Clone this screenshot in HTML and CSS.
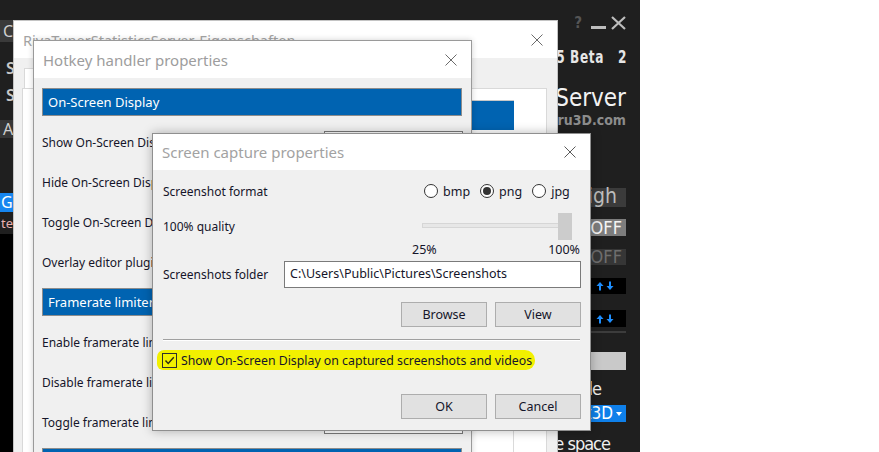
FILE: index.html
```html
<!DOCTYPE html>
<html lang="en">
<head>
    <meta charset="UTF-8">
    <meta name="viewport" content="width=device-width, initial-scale=1.0">
    <title>Screen capture properties</title>
    <link rel="stylesheet" href="styles.css">
</head>
<body>
    <div class="desktop">
        <!-- dark RTSS main window behind the dialogs -->
        <div class="app">
            <div class="app-left">
                <div class="chip">C</div>
                <div class="side-letter">S</div>
                <div class="side-letter second">S</div>
                <div class="chip small">A</div>
                <div class="chip blue">G</div>
                <div class="side-red">te</div>
                <div class="side-black"></div>
            </div>

            <div class="app-right">
                <div class="app-controls">
                    <span class="help">?</span>
                    <span class="minimize"></span>
                    <svg width="15" height="14" viewBox="0 0 15 14"><path d="M1 1 L14 13 M14 1 L1 13" stroke="#bdbdbd" stroke-width="2.2" fill="none"/></svg>
                </div>
                <div class="version">v7.3.5 Beta<span class="build">2</span></div>
                <div class="brand">RivaTuner Statistics Server</div>
                <div class="brand-sub">Guru3D.com</div>

                <div class="tile dim">High</div>
                <div class="tile grey">OFF</div>
                <div class="tile dark">OFF</div>
                <div class="tile black">
                    <svg width="20" height="10" viewBox="0 0 20 10"><path d="M5 1 L1.5 5 H4 V9.5 H6 V5 H8.5 Z M15 9 L18.5 5 H16 V0.5 H14 V5 H11.5 Z" fill="#1e8fff"/></svg>
                </div>
                <div class="tile black second">
                    <svg width="20" height="10" viewBox="0 0 20 10"><path d="M5 1 L1.5 5 H4 V9.5 H6 V5 H8.5 Z M15 9 L18.5 5 H16 V0.5 H14 V5 H11.5 Z" fill="#1e8fff"/></svg>
                </div>
                <div class="rule"></div>
                <div class="tile light"></div>
                <div class="app-text">Profile</div>
                <div class="tile blue">Direct3D<span class="caret"></span></div>
                <div class="app-text space">Free space</div>
            </div>
        </div>

        <!-- RivaTunerStatisticsServer-Eigenschaften -->
        <section class="window props">
            <header class="titlebar">
                <span class="title">RivaTunerStatisticsServer-Eigenschaften</span>
                <svg class="close" width="12" height="12" viewBox="0 0 12 12"><path d="M0.5 0.5 L11.5 11.5 M11.5 0.5 L0.5 11.5" stroke="#6b6b6b" stroke-width="1" fill="none"/></svg>
            </header>
            <div class="props-body">
                <div class="tabs">
                    <span class="tab">Allgemein</span>
                </div>
                <div class="tab-panel">
                    <div class="panel-bar"></div>
                    <div class="panel-list"></div>
                </div>
            </div>
        </section>

        <!-- Hotkey handler properties -->
        <section class="window hotkey">
            <header class="titlebar">
                <span class="title">Hotkey handler properties</span>
                <svg class="close" width="12" height="12" viewBox="0 0 12 12"><path d="M0.5 0.5 L11.5 11.5 M11.5 0.5 L0.5 11.5" stroke="#6b6b6b" stroke-width="1" fill="none"/></svg>
            </header>
            <div class="hotkey-body">
                <div class="group-bar">On-Screen Display</div>
                <div class="hotkey-row"><span>Show On-Screen Display</span><span class="key-box"></span></div>
                <div class="hotkey-row"><span>Hide On-Screen Display</span><span class="key-box"></span></div>
                <div class="hotkey-row"><span>Toggle On-Screen Display</span><span class="key-box"></span></div>
                <div class="hotkey-row"><span>Overlay editor plugin</span><span class="key-box"></span></div>
                <div class="group-bar">Framerate limiter</div>
                <div class="hotkey-row"><span>Enable framerate limiter</span><span class="key-box"></span></div>
                <div class="hotkey-row"><span>Disable framerate limiter</span><span class="key-box"></span></div>
                <div class="hotkey-row"><span>Toggle framerate limiter</span><span class="key-box"></span></div>
                <div class="group-bar"></div>
            </div>
        </section>

        <!-- Screen capture properties -->
        <section class="window capture">
            <header class="titlebar">
                <span class="title">Screen capture properties</span>
                <svg class="close" width="12" height="12" viewBox="0 0 12 12"><path d="M0.5 0.5 L11.5 11.5 M11.5 0.5 L0.5 11.5" stroke="#5a5a5a" stroke-width="1" fill="none"/></svg>
            </header>
            <div class="capture-body">
                <div class="field format-row">
                    <span class="label">Screenshot format</span>
                    <div class="control radios">
                        <span class="radio-item"><span class="radio"></span>bmp</span>
                        <span class="radio-item"><span class="radio checked"></span>png</span>
                        <span class="radio-item"><span class="radio"></span>jpg</span>
                    </div>
                </div>
                <div class="field quality-row">
                    <span class="label">100% quality</span>
                    <div class="control">
                        <div class="slider">
                            <div class="slider-track"></div>
                            <div class="slider-thumb"></div>
                        </div>
                    </div>
                </div>
                <div class="field ticks-row">
                    <span class="label"></span>
                    <div class="control ticks"><span>25%</span><span>100%</span></div>
                </div>
                <div class="field folder-row">
                    <span class="label">Screenshots folder</span>
                    <div class="control">
                        <div class="path-input">C:\Users\Public\Pictures\Screenshots</div>
                    </div>
                </div>
                <div class="button-row browse-row">
                    <button class="btn">Browse</button>
                    <button class="btn">View</button>
                </div>
                <div class="separator"></div>
                <div class="check-row">
                    <span class="marker">
                        <span class="checkbox">
                            <svg width="13" height="13" viewBox="0 0 13 13"><path d="M2.5 6.5 L5.2 9.4 L10.8 3.2" stroke="#2b2b10" stroke-width="1.4" fill="none"/></svg>
                        </span>
                        Show On-Screen Display on captured screenshots and videos
                    </span>
                </div>
                <div class="button-row ok-row">
                    <button class="btn">OK</button>
                    <button class="btn">Cancel</button>
                </div>
            </div>
        </section>
    </div>
</body>
</html>
```

FILE: styles.css
```css
:root {
    --dark-bg: #1f1f1f;
    --dialog-bg: #f0f0f0;
    --bar-blue: #0063b1;
    --label-color: #15152a;
    --title-grey: #9d9d9d;
}

body {
    margin: 0;
    background: #fff;
    font-family: 'Noto Sans', 'Open Sans', sans-serif;
    font-size: 12px;
    color: var(--label-color);
}

.desktop {
    position: relative;
    width: 879px;
    height: 452px;
    overflow: hidden;
    background: #fff;
}

/* ---------- dark main window ---------- */

.app {
    position: relative;
    width: 640px;
    height: 452px;
    background: var(--dark-bg);
    overflow: hidden;
}

.app-left {
    position: absolute;
    left: 0;
    top: 20px;
    width: 13px;
    height: 432px;
    display: flex;
    flex-direction: column;
    font-family: 'Noto Sans', sans-serif;
}

.chip {
    height: 22px;
    background: #3a3a3a;
    color: #cfcfcf;
    font-size: 16px;
    line-height: 22px;
    padding-left: 3px;
}

.chip.small {
    margin-top: 18px;
    height: 18px;
    line-height: 18px;
    background: #363636;
}

.chip.blue {
    margin-top: 55px;
    height: 19px;
    line-height: 19px;
    background: #1686f0;
    color: #fff;
    padding-left: 1px;
}

.side-letter {
    margin-top: 19px;
    height: 14px;
    line-height: 14px;
    color: #c8c8c8;
    font-size: 16px;
    font-weight: 600;
    padding-left: 6px;
}

.side-letter.second {
    margin-top: 13px;
}

.side-red {
    margin-top: 4px;
    height: 14px;
    line-height: 14px;
    color: #e8b0b0;
    font-size: 13px;
    padding-left: 1px;
}

.side-black {
    margin-top: 4px;
    flex: 1;
    background: #000;
}

.app-right {
    position: absolute;
    top: 0;
    right: 14px;
    width: 200px;
    display: flex;
    flex-direction: column;
    align-items: flex-end;
    font-family: 'DejaVu Sans Condensed', 'DejaVu Sans', sans-serif;
}

.app-controls {
    display: flex;
    align-items: center;
    gap: 5px;
    margin-top: 15px;
    height: 15px;
}

.help {
    color: #555;
    font-weight: bold;
    font-size: 15px;
    margin-right: 4px;
}

.minimize {
    width: 15px;
    height: 3px;
    margin-top: 9px;
    background: #bdbdbd;
}

.version {
    margin-top: 19px;
    color: #e6e6e6;
    font-weight: bold;
    font-size: 13.5px;
    letter-spacing: 0.6px;
    margin-right: -1px;
    line-height: 16px;
    white-space: nowrap;
    transform: scaleY(1.3);
}

.build {
    margin-left: 14px;
}

.brand {
    margin-top: 20px;
    color: #f2f2f2;
    font-size: 24px;
    line-height: 26px;
    white-space: nowrap;
}

.brand-sub {
    color: #8c8c8c;
    font-weight: bold;
    font-size: 14px;
    line-height: 18px;
}

.tile {
    width: 90px;
    height: 17px;
    box-sizing: border-box;
    text-align: right;
    font-size: 18px;
    line-height: 17px;
    padding-right: 4px;
    white-space: nowrap;
}

.tile.dim {
    margin-top: 59px;
    height: 19px;
    line-height: 17px;
    font-size: 21px;
    background: #3b3b3b;
    color: #bdbdbd;
    padding-right: 9px;
}

.tile.grey {
    margin-top: 12px;
    background: #7d7d7d;
    color: #f4f4f4;
}

.tile.dark {
    margin-top: 13px;
    height: 16px;
    line-height: 16px;
    background: #363636;
    color: #6e6e6e;
}

.tile.black {
    margin-top: 13px;
    height: 16px;
    background: #000;
    display: flex;
    align-items: center;
    justify-content: flex-end;
    padding-right: 11px;
}

.tile.black.second {
    margin-top: 16px;
    height: 17px;
}

.rule {
    margin-top: 4px;
    width: 90px;
    height: 2px;
    background: #3c3c3c;
}

.tile.light {
    margin-top: 19px;
    height: 18px;
    background: #c9c9c9;
}

.app-text {
    margin-top: 9px;
    color: #f0f0f0;
    font-size: 18px;
    line-height: 20px;
    letter-spacing: -1px;
    padding-right: 25px;
    white-space: nowrap;
}

.tile.blue {
    margin-top: 6px;
    font-size: 17px;
    background: #0f80ea;
    color: #fff;
    display: flex;
    align-items: center;
    justify-content: flex-end;
    padding-right: 4px;
}

.caret {
    width: 0;
    height: 0;
    margin-left: 3px;
    border-left: 3px solid transparent;
    border-right: 3px solid transparent;
    border-top: 4px solid #fff;
}

.app-text.space {
    margin-top: 12px;
    padding-right: 16px;
}

/* ---------- windows ---------- */

.window {
    position: absolute;
    box-sizing: border-box;
    background: var(--dialog-bg);
    border: 1px solid #a9a9a9;
    display: flex;
    flex-direction: column;
}

.titlebar {
    height: 37px;
    flex-shrink: 0;
    background: #fff;
    display: flex;
    align-items: center;
    justify-content: space-between;
    padding: 0 14px 0 9px;
}

.title {
    color: var(--title-grey);
    font-size: 15px;
    white-space: nowrap;
}

.props {
    left: 13px;
    top: 20px;
    width: 545px;
    height: 450px;
    border-color: #c4c4c4;
}

.props .title {
    font-size: 14.5px;
    color: #a3a3a3;
}

.props-body {
    flex: 1;
    display: flex;
    flex-direction: column;
    padding: 10px 10px 0 8px;
}

.tabs {
    height: 20px;
    display: flex;
    padding-left: 2px;
}

.tab {
    border: 1px solid #d9d9d9;
    border-bottom: none;
    background: #fff;
    padding: 0 12px;
    line-height: 19px;
}

.tab-panel {
    flex: 1;
    background: #fff;
    border: 1px solid #d9d9d9;
    padding: 11px 32px 0 10px;
}

.panel-bar {
    height: 30px;
    background: var(--bar-blue);
    border-top: 1px solid #c8c8c8;
    box-sizing: border-box;
}

.panel-list {
    margin-top: 301px;
    height: 40px;
    border-right: 1px solid #dadada;
}

.hotkey {
    left: 33px;
    top: 40px;
    width: 439px;
    height: 440px;
    border-color: #9a9a9a;
    box-shadow: 0 0 6px rgba(0, 0, 0, 0.18);
}

.hotkey-body {
    padding: 10px 9px 0 8px;
}

.group-bar {
    height: 28px;
    box-sizing: border-box;
    background: var(--bar-blue);
    border: 1px solid #8c8c8c;
    color: #fff;
    font-size: 13px;
    line-height: 26px;
    padding-left: 5px;
}

.hotkey-row {
    height: 40px;
    display: flex;
    align-items: center;
    justify-content: space-between;
}

.hotkey-row:first-of-type,
.group-bar + .hotkey-row {
    margin-top: 6px;
}

.hotkey-row + .group-bar {
    margin-top: 6px;
}

.key-box {
    width: 139px;
    height: 23px;
    margin-right: -1px;
    box-sizing: border-box;
    background: #fff;
    border: 1px solid #7a7a7a;
}

/* ---------- screen capture dialog ---------- */

.capture {
    left: 152px;
    top: 133px;
    width: 439px;
    height: 298px;
    border-color: #8f8f8f;
    box-shadow: 0 0 10px rgba(0, 0, 0, 0.28);
}

.capture .titlebar {
    height: 36px;
    padding-right: 14px;
}

.capture .title {
    color: #a2a2a2;
}

.capture-body {
    padding: 0 9px 0 10px;
}

.field {
    display: flex;
    align-items: center;
}

.label {
    width: 121px;
    flex-shrink: 0;
    white-space: nowrap;
}

.control {
    flex: 1;
}

.format-row {
    margin-top: 10px;
    height: 22px;
}

.radios {
    display: flex;
    align-items: center;
    padding-left: 140px;
    gap: 10px;
}

.radio-item {
    display: flex;
    align-items: center;
    gap: 5px;
    font-size: 12.5px;
}

.radio {
    width: 14px;
    height: 14px;
    box-sizing: border-box;
    border: 1px solid #333;
    border-radius: 50%;
    background: #fff;
    display: flex;
    align-items: center;
    justify-content: center;
}

.radio.checked::after {
    content: "";
    width: 8px;
    height: 8px;
    border-radius: 50%;
    background: #333;
}

.quality-row {
    margin-top: 11px;
    height: 27px;
}

.slider {
    position: relative;
    margin-left: 138px;
    width: 150px;
    height: 27px;
}

.slider-track {
    position: absolute;
    left: 0;
    right: 1px;
    top: 10px;
    height: 5px;
    box-sizing: border-box;
    background: #e7e7e7;
    border: 1px solid #d6d6d6;
}

.slider-thumb {
    position: absolute;
    right: 0;
    top: 0;
    width: 14px;
    height: 27px;
    background: #cccccc;
}

.ticks-row {
    margin-top: 2px;
    height: 14px;
}

.ticks {
    display: flex;
    justify-content: space-between;
    padding-left: 128px;
    margin-right: 1px;
    font-size: 12.5px;
}

.folder-row {
    margin-top: 5px;
    height: 27px;
}

.path-input {
    height: 27px;
    box-sizing: border-box;
    background: #fff;
    border: 1px solid #7a7a7a;
    padding-left: 5px;
    line-height: 24px;
    font-size: 12.5px;
}

.button-row {
    display: flex;
    justify-content: flex-end;
    gap: 8px;
}

.browse-row {
    margin-top: 14px;
}

.ok-row {
    margin-top: 24px;
}

.btn {
    width: 86px;
    height: 25px;
    background: #e1e1e1;
    border: 1px solid #adadad;
    font-family: inherit;
    font-size: 12.5px;
    color: var(--label-color);
    padding: 0;
}

.separator {
    margin-top: 12px;
    margin-right: 1px;
    height: 1px;
    background: #a0a0a0;
    border-bottom: 1px solid #fff;
}

.check-row {
    margin-top: 9px;
    height: 20px;
    display: flex;
}

.marker {
    display: flex;
    align-items: center;
    gap: 4px;
    margin-left: -6px;
    padding: 0 3px 0 5px;
    background: #f2f000;
    border-radius: 7px 10px 9px 6px;
    white-space: nowrap;
    font-size: 12.3px;
}

.checkbox {
    width: 15px;
    height: 15px;
    box-sizing: border-box;
    border: 1px solid #2e2e2e;
    display: flex;
    align-items: center;
    justify-content: center;
}
```
